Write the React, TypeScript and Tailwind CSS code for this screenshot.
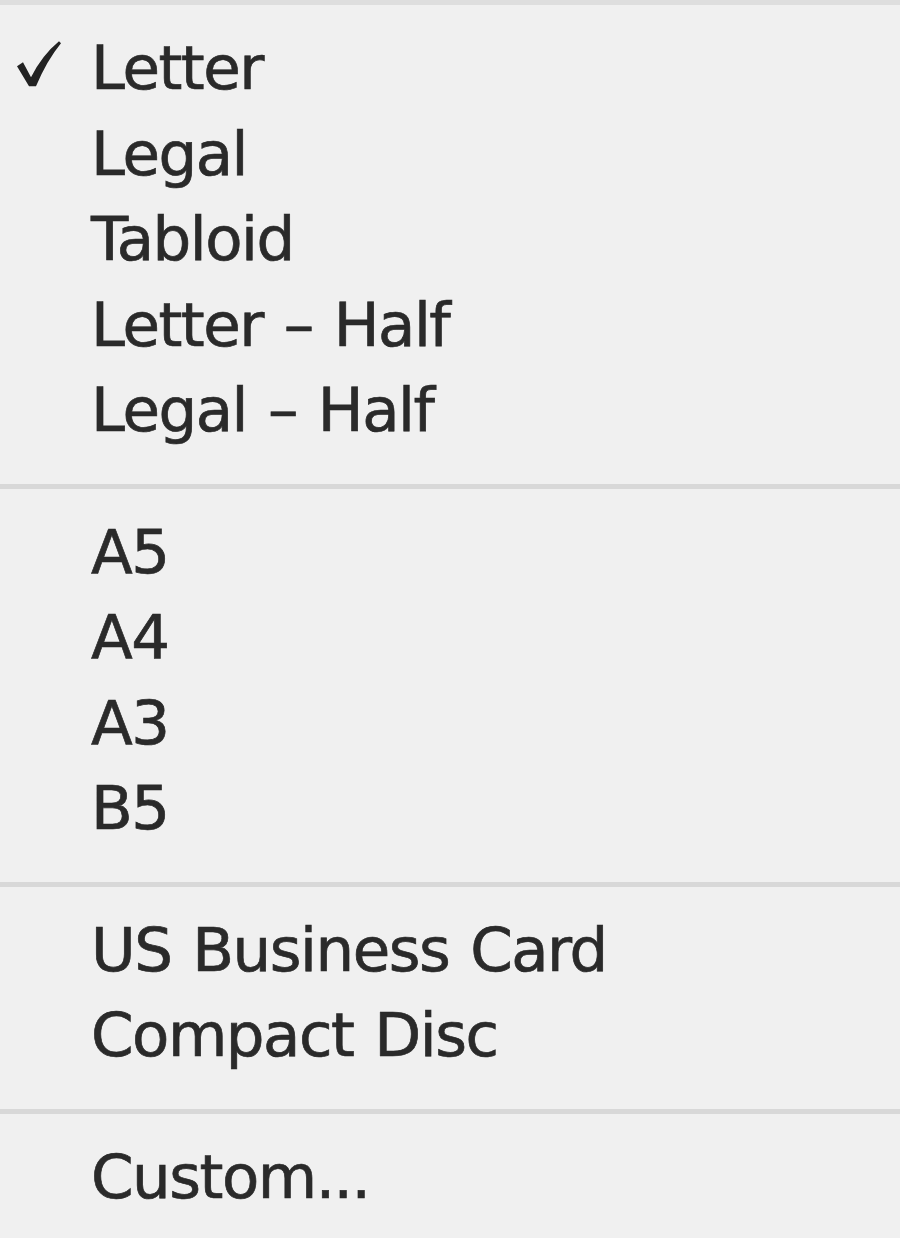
import React from "react";

const sections: string[][] = [
  ["Letter", "Legal", "Tabloid", "Letter – Half", "Legal – Half"],
  ["A5", "A4", "A3", "B5"],
  ["US Business Card", "Compact Disc"],
  ["Custom..."],
];

const Check = () => (
  <svg width="46" height="48" viewBox="0 0 46 48" className="absolute left-[16px] top-1/2 -translate-y-[58%]">
    <path
      d="M1 26 L7 22 L15 37 Q26 15 43 1 L45 3 Q31 20 20 46 L13 46 Z"
      fill="#222222"
    />
  </svg>
);

const MenuItem = ({ label, checked }: { label: string; checked?: boolean }) => (
  <div className="relative h-[85.5px] flex items-center pl-[91px]">
    {checked && <Check />}
    <span className="text-[61px] leading-[85px] tracking-[-1.5px] [word-spacing:3px] [-webkit-text-stroke:0.7px_#2a2a2a] text-[#2a2a2a] whitespace-nowrap">
      {label}
    </span>
  </div>
);

export default function App() {
  return (
    <div
      className="w-[900px] h-[1238px] overflow-hidden bg-[#f0f0f0] flex flex-col"
      style={{ fontFamily: '"DejaVu Sans", "Liberation Sans", sans-serif' }}
    >
      <div className="h-[5px] bg-[#dedede] shrink-0" />
      {sections.map((items, i) => (
        <div key={i}>
          {i > 0 && <div className="h-[5px] bg-[#d8d8d8]" />}
          <div className="pt-[20px] pb-[31px]">
            {items.map((label, j) => (
              <MenuItem key={label} label={label} checked={i === 0 && j === 0} />
            ))}
          </div>
        </div>
      ))}
    </div>
  );
}
